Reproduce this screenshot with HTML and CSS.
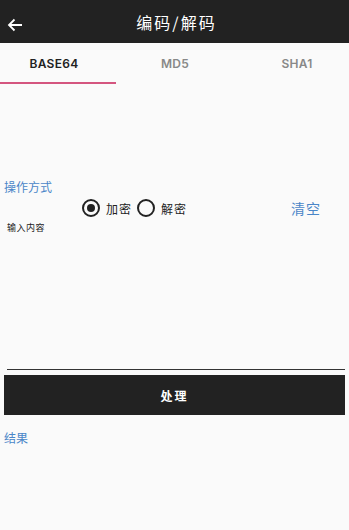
FILE: index.html
```html
<!DOCTYPE html>
<html lang="zh">
<head>
  <meta charset="utf-8">
  <title>编码/解码</title>
  <link rel="stylesheet" href="styles.css">
</head>
<body>

  <div class="toolbar">
    <span class="back">
      <svg width="16" height="14" viewBox="0 0 16 14"><path d="M15 7H2M7.5 1.5L2 7l5.5 5.5" fill="none" stroke="#fff" stroke-width="1.8"/></svg>
    </span>
    <span class="title">编码/解码</span>
  </div>

  <div class="tabs">
    <div class="tab active">BASE64</div>
    <div class="tab">MD5</div>
    <div class="tab">SHA1</div>
  </div>

  <div class="content">
    <div class="label">操作方式</div>
    <div class="mode-row">
      <div class="radios">
        <span class="radio checked"></span><span class="radio-text">加密</span>
        <span class="radio"></span><span class="radio-text">解密</span>
      </div>
      <span class="clear">清空</span>
    </div>
    <div class="input-area">
      <div class="input-hint">输入内容</div>
    </div>
    <button class="submit">处理</button>
    <div class="label result">结果</div>
  </div>

</body>
</html>
```

FILE: styles.css
```css
body {
  margin: 0;
  background: #fafafa;
  font-family: "Noto Sans CJK SC", "Noto Sans", sans-serif;
  width: 349px;
  height: 530px;
  overflow: hidden;
}

.toolbar {
  height: 43px;
  background: #222222;
  display: flex;
  align-items: center;
  justify-content: center;
  position: relative;
}

.back {
  position: absolute;
  left: 7px;
  top: 13px;
}

.title {
  color: #fff;
  font-size: 16px;
  letter-spacing: 2px;
  margin-left: 4px;
}

.tabs {
  display: flex;
  height: 41px;
  background: #fafafa;
}

.tab {
  width: 116px;
  display: flex;
  align-items: center;
  justify-content: center;
  font-family: "Inter", "Noto Sans", sans-serif;
  font-size: 12px;
  font-weight: 600;
  color: #888;
  letter-spacing: 0.3px;
  box-sizing: border-box;
}

.tab:nth-child(1) { padding-right: 8px; }
.tab:nth-child(2) { padding-left: 2px; }
.tab:nth-child(3) { width: 117px; padding-left: 13px; }

.tab.active {
  color: #222;
  border-bottom: 2px solid #d4557f;
  padding-top: 1px;
}

.content {
  padding: 0 4px;
}

.label {
  color: #4a86c8;
  font-size: 12px;
  margin-top: 94px;
  line-height: 17px;
}

.mode-row {
  display: flex;
  align-items: center;
  height: 24px;
  margin-top: 1px;
}

.radios {
  display: flex;
  align-items: center;
  margin-left: 78px;
}

.radio {
  width: 18px;
  height: 18px;
  border: 2px solid #222;
  border-radius: 50%;
  box-sizing: border-box;
  position: relative;
}

.radio.checked::after {
  content: "";
  position: absolute;
  left: 3px;
  top: 3px;
  width: 8px;
  height: 8px;
  border-radius: 50%;
  background: #222;
}

.radio-text {
  font-size: 12px;
  color: #222;
  margin: 0 5px 0 6px;
  letter-spacing: 1px;
}

.clear {
  margin-left: auto;
  margin-right: 24px;
  color: #4a86c8;
  font-size: 14px;
  letter-spacing: 1px;
}

.input-area {
  margin: 0 0 0 3px;
  height: 148px;
  border-bottom: 1.5px solid #333;
}

.input-hint {
  font-size: 9px;
  color: #222;
  margin-top: 1px;
  letter-spacing: 0.5px;
}

.submit {
  display: block;
  width: 341px;
  height: 40px;
  margin-top: 5px;
  border: none;
  background: #222;
  color: #fff;
  font-family: "Noto Sans CJK SC", sans-serif;
  font-size: 12px;
  font-weight: bold;
  letter-spacing: 2px;
}

.label.result {
  margin-top: 14px;
  font-size: 12px;
}
```
